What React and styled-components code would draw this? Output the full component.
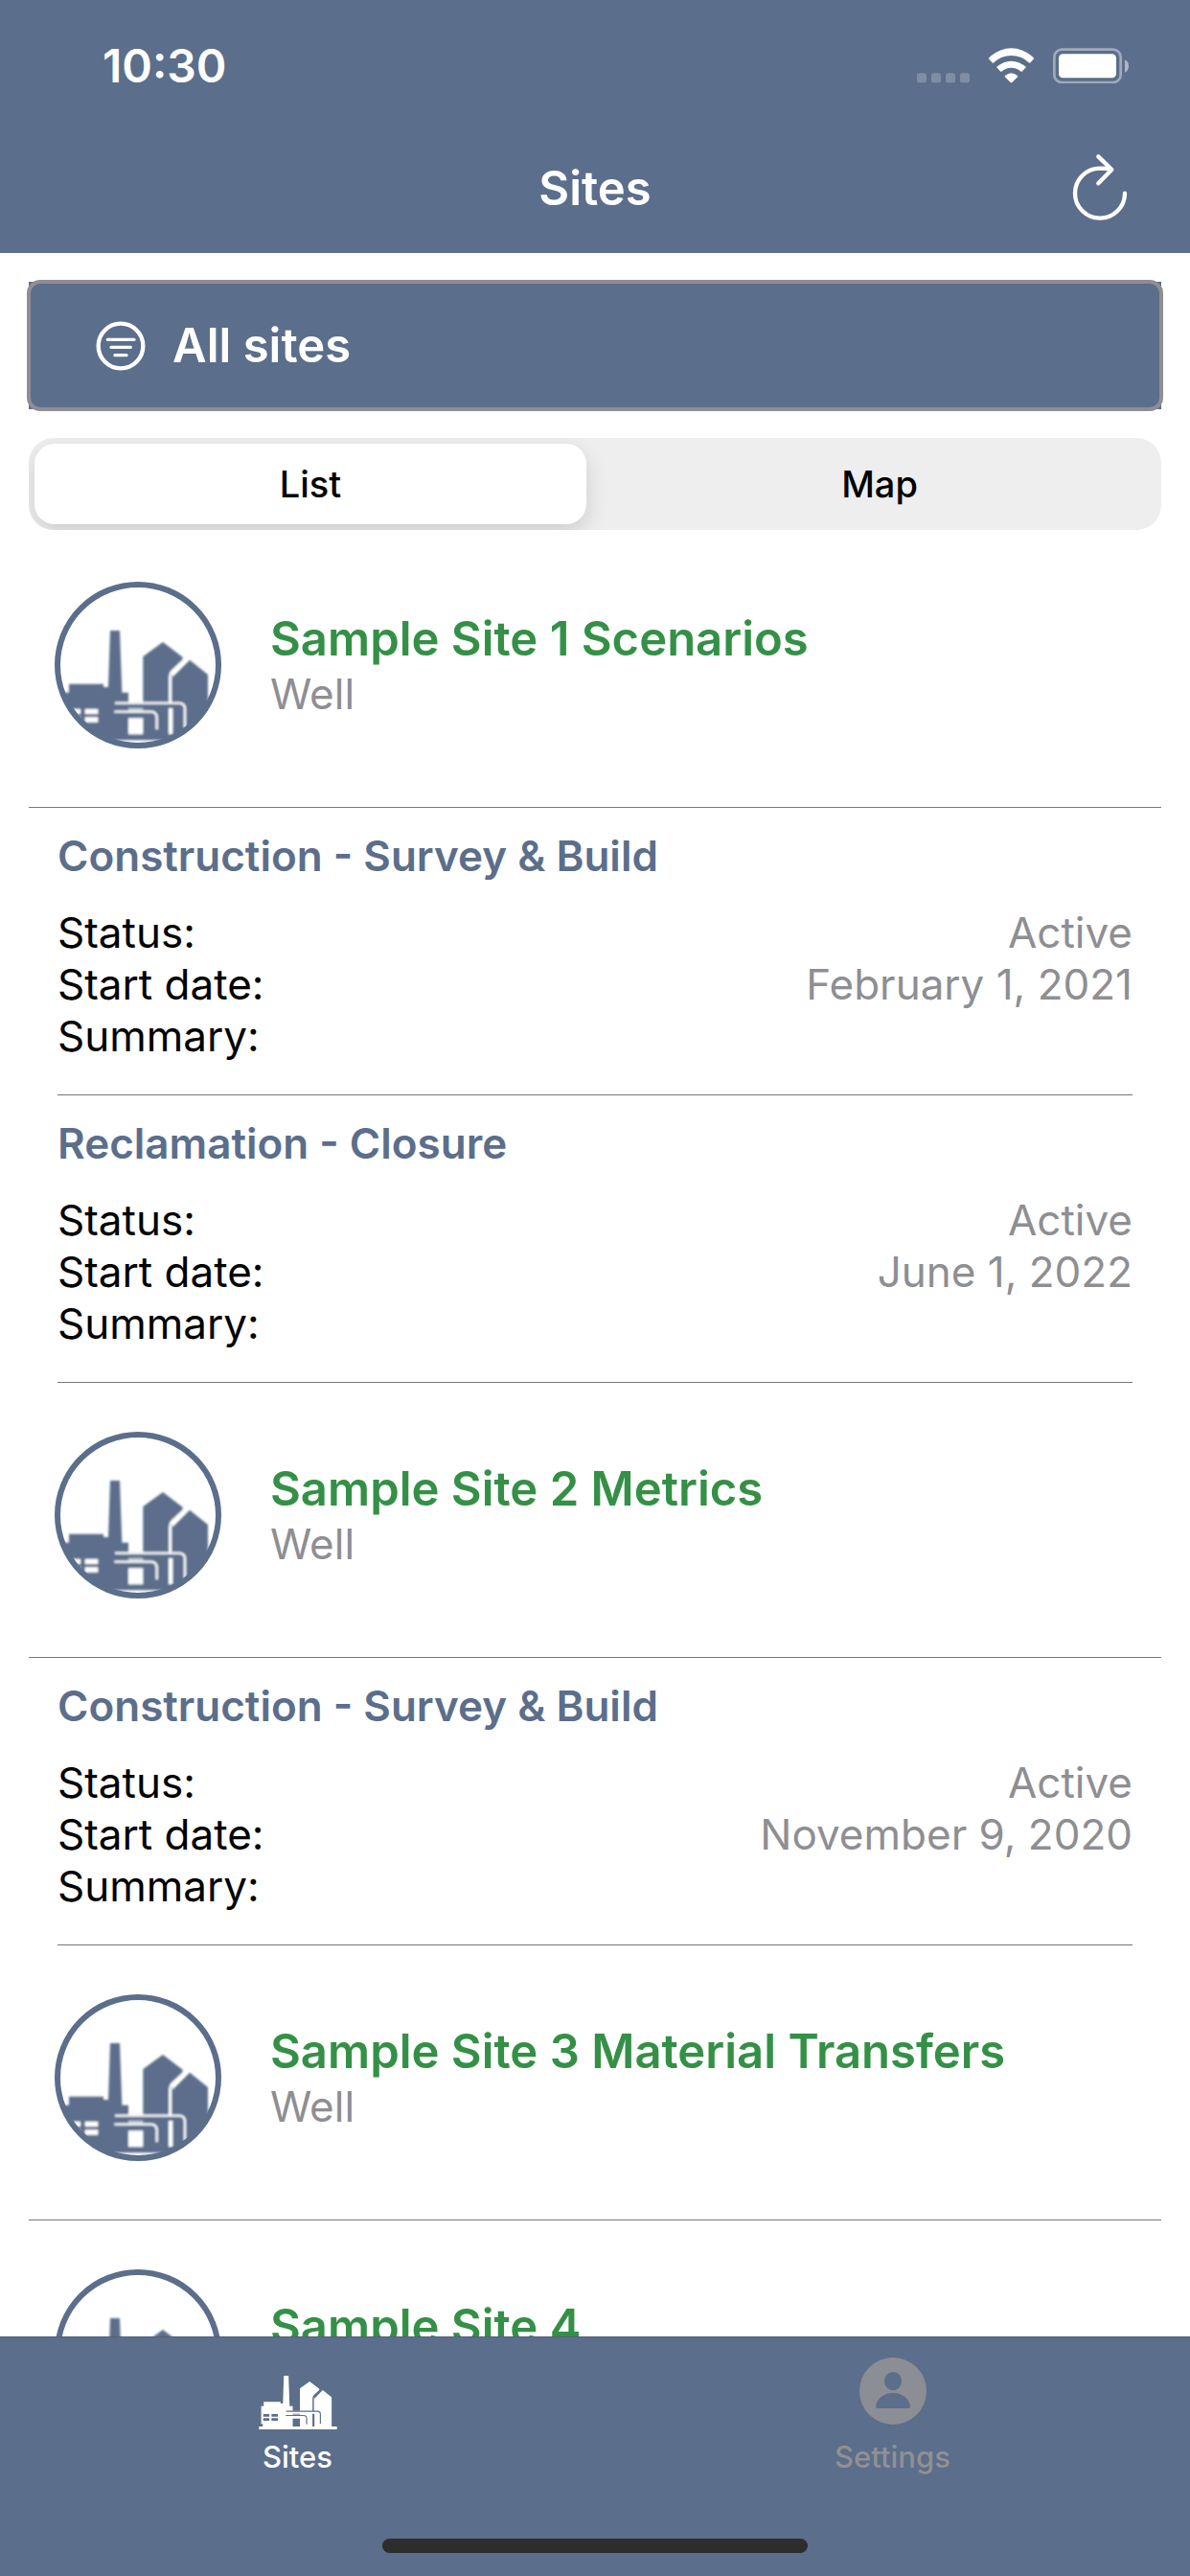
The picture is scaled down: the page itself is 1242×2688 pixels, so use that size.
import React, { useState } from 'react';
import styled, { createGlobalStyle, ThemeProvider } from 'styled-components';

const theme = {
  colors: {
    primary: '#5b6e8b',
    green: '#349046',
    gray: '#8e8e93',
    line: '#77777a',
  },
};

const sites = [
  {
    name: 'Sample Site 1 Scenarios',
    type: 'Well',
    phases: [
      { title: 'Construction - Survey & Build', status: 'Active', start: 'February 1, 2021' },
      { title: 'Reclamation - Closure', status: 'Active', start: 'June 1, 2022' },
    ],
  },
  {
    name: 'Sample Site 2 Metrics',
    type: 'Well',
    phases: [
      { title: 'Construction - Survey & Build', status: 'Active', start: 'November 9, 2020' },
    ],
  },
  { name: 'Sample Site 3 Material Transfers', type: 'Well', phases: [] },
  { name: 'Sample Site 4', type: 'Well', phases: [] },
];

const FactoryShape = ({ color, cut }) => (
  <g>
    <path
      fill={color}
      d="M66 529H90V511H80V398H96V371H204V381H219L225 204H255L262 398H282V428H328V285L390 240L452 287V300L420 332V350L474 296L531 342V529H565V547H66Z"
    />
    <path fill="none" stroke={cut} strokeWidth="9" d="M458 296L420 331Q413 338 413 348V430" />
    <path fill="none" stroke={cut} strokeWidth="7" d="M240 431H440Q459 431 459 450V510" />
    <path fill="none" stroke={cut} strokeWidth="7" d="M238 458H352Q371 458 371 477V514" />
    <path
      fill={cut}
      d="M93 449H132V465H93ZM146 449H187V465H146ZM93 475H132V491H93ZM146 475H187V491H146ZM282 478H328V529H282ZM408 447H421V529H408Z"
    />
    <path fill={cut} opacity="0.6" d="M282 446H328V456H282Z" />
  </g>
);

const SiteLogo = () => (
  <svg width="174" height="174" viewBox="51 51 522 522" aria-hidden="true">
    <defs>
      <clipPath id="logoClip">
        <circle cx="312" cy="312" r="252" />
      </clipPath>
      <filter id="logoSoft">
        <feGaussianBlur stdDeviation="3" />
      </filter>
    </defs>
    <g clipPath="url(#logoClip)">
      <g filter="url(#logoSoft)">
        <FactoryShape color={theme.colors.primary} cut="#fff" />
      </g>
    </g>
    <circle cx="312" cy="312" r="252" fill="none" stroke={theme.colors.primary} strokeWidth="18" />
  </svg>
);

const SitesIcon = () => (
  <svg width="82" height="58" viewBox="64 200 503 350" aria-hidden="true">
    <FactoryShape color="#fff" cut={theme.colors.primary} />
  </svg>
);

const SettingsIcon = () => (
  <svg width="70" height="70" viewBox="0 0 210 210" aria-hidden="true">
    <circle cx="105" cy="105" r="105" fill="#8b8e94" />
    <ellipse cx="105" cy="74" rx="27" ry="29" fill={theme.colors.primary} />
    <path
      fill={theme.colors.primary}
      d="M57 159Q51 159 51 152C54 130 76 111 105 111S156 130 159 152Q159 159 153 159Z"
    />
  </svg>
);

const StatusIcons = () => (
  <svg width="222" height="38" viewBox="0 0 666 114" aria-hidden="true">
    <g fill="#fff" opacity="0.22">
      <rect x="3" y="82" width="30" height="30" rx="8" />
      <rect x="48" y="82" width="30" height="30" rx="8" />
      <rect x="93" y="82" width="30" height="30" rx="8" />
      <rect x="138" y="82" width="30" height="30" rx="8" />
    </g>
    <g fill="#fff">
      <path d="M227 36Q231 32 235 28A96 96 0 0 1 362 28L370 36L357 50Q355 51 353 49A78 78 0 0 0 244 49Q242 51 240 50Z" />
      <path d="M252 63A68 68 0 0 1 345 63L332 77Q331 78 329 77A46 46 0 0 0 268 77Q266 78 265 77Z" />
      <path d="M279 90Q298 73 318 90L319 93L301 111Q298 113 296 111L278 93Z" />
    </g>
    <rect x="433" y="8" width="208" height="103" rx="24" fill="none" stroke="#fff" strokeWidth="8" opacity="0.42" />
    <rect x="447" y="22" width="180" height="75" rx="13" fill="#fff" />
    <path fill="#fff" opacity="0.5" d="M654 40Q666 46 666 60T654 80Z" />
  </svg>
);

const RefreshIcon = () => (
  <svg width="60" height="72" viewBox="0 0 180 216" aria-hidden="true">
    <path
      fill="none"
      stroke="#fff"
      strokeWidth="13"
      strokeLinecap="round"
      strokeLinejoin="round"
      d="M168 125A78 78 0 1 1 90 47Q110 47 126 51M85 10L127 51L85 94"
    />
  </svg>
);

const FilterIcon = () => (
  <svg width="52" height="52" viewBox="0 0 156 156" aria-hidden="true">
    <g fill="none" stroke="#fff" strokeLinecap="round">
      <circle cx="78" cy="78" r="70" strokeWidth="13" />
      <path strokeWidth="10" d="M37 58H120M48 82H109M60 107H96" />
    </g>
  </svg>
);

const Phase = ({ title, status, start }) => (
  <PhaseBox>
    <h3>{title}</h3>
    <dl>
      <Field>
        <dt>Status:</dt>
        <dd>{status}</dd>
      </Field>
      <Field>
        <dt>Start date:</dt>
        <dd>{start}</dd>
      </Field>
      <Field>
        <dt>Summary:</dt>
        <dd />
      </Field>
    </dl>
  </PhaseBox>
);

const App = () => {
  const [view, setView] = useState('list');

  return (
    <ThemeProvider theme={theme}>
      <GlobalStyle />
      <Screen>
        <Header>
          <StatusBar>
            <Clock>10:30</Clock>
            <StatusIcons />
          </StatusBar>
          <NavBar>
            <h1>Sites</h1>
            <RefreshButton type="button" aria-label="Refresh">
              <RefreshIcon />
            </RefreshButton>
          </NavBar>
        </Header>
        <Content>
          <FilterButton type="button">
            <FilterIcon />
            All sites
          </FilterButton>
          <Segments>
            <Segment type="button" $active={view === 'list'} onClick={() => setView('list')}>
              List
            </Segment>
            <Segment type="button" $active={view === 'map'} onClick={() => setView('map')}>
              Map
            </Segment>
          </Segments>
          <SiteList>
            {sites.map((site) => (
              <li key={site.name}>
                <SiteRow>
                  <SiteLogo />
                  <SiteText>
                    <h2>{site.name}</h2>
                    <p>{site.type}</p>
                  </SiteText>
                </SiteRow>
                {site.phases.map((phase) => (
                  <Phase key={phase.title} {...phase} />
                ))}
              </li>
            ))}
          </SiteList>
        </Content>
        <Footer>
          <TabBar>
            <Tab href="#sites" $active>
              <TabIcon>
                <SitesIcon />
              </TabIcon>
              Sites
            </Tab>
            <Tab href="#settings">
              <TabIcon>
                <SettingsIcon />
              </TabIcon>
              Settings
            </Tab>
          </TabBar>
          <HomeIndicator />
        </Footer>
      </Screen>
    </ThemeProvider>
  );
};

export default App;

const GlobalStyle = createGlobalStyle`
  * {
    box-sizing: border-box;
    margin: 0;
    padding: 0;
  }

  body {
    background: #fff;
    font-family: Inter, "Liberation Sans", sans-serif;
  }

  button {
    border: none;
    background: none;
    font-family: inherit;
    cursor: pointer;
  }

  svg {
    display: block;
    flex-shrink: 0;
  }
`;

const Screen = styled.div`
  height: 100vh;
  display: flex;
  flex-direction: column;
`;

const Header = styled.header`
  flex-shrink: 0;
  background: ${({ theme }) => theme.colors.primary};
  color: #fff;
`;

const StatusBar = styled.div`
  height: 132px;
  padding: 4px 64px 0 107px;
  display: flex;
  align-items: center;
  justify-content: space-between;
`;

const Clock = styled.span`
  font-size: 48px;
  font-weight: 600;
`;

const NavBar = styled.div`
  height: 132px;
  padding: 0 64px 4px;
  display: grid;
  grid-template-columns: 1fr auto 1fr;
  align-items: center;

  h1 {
    grid-column: 2;
    font-size: 49px;
    font-weight: 600;
  }
`;

const RefreshButton = styled.button`
  justify-self: end;
`;

const Content = styled.main`
  flex: 1;
  min-height: 0;
  padding: 30px 30px 0;
  display: flex;
  flex-direction: column;
`;

const FilterButton = styled.button`
  position: relative;
  flex-shrink: 0;
  height: 133px;
  padding: 0 70px;
  display: flex;
  align-items: center;
  gap: 28px;
  background: ${({ theme }) => theme.colors.primary};
  color: #fff;
  font-size: 49px;
  font-weight: 600;

  &::after {
    content: '';
    position: absolute;
    inset: -2px;
    border: 4px solid #8f8e92;
    border-radius: 14px;
  }
`;

const Segments = styled.div`
  flex-shrink: 0;
  height: 96px;
  margin-top: 30px;
  padding: 6px;
  display: flex;
  gap: 18px;
  border-radius: 26px;
  overflow: hidden;
  background: #eee;
`;

const Segment = styled.button`
  flex: 1;
  border-radius: 21px;
  background: ${({ $active }) => ($active ? '#fff' : 'transparent')};
  box-shadow: ${({ $active }) => ($active ? '0 9px 24px rgba(0, 0, 0, 0.14)' : 'none')};
  color: #000;
  font-size: 38px;
  font-weight: 500;
`;

const SiteList = styled.ul`
  flex: 1;
  min-height: 0;
  margin-top: 3px;
  overflow-y: auto;
  scrollbar-width: none;
  list-style: none;
`;

const SiteRow = styled.div`
  padding: 51px 27px 61px;
  display: flex;
  gap: 51px;
  border-bottom: 1px solid ${({ theme }) => theme.colors.line};
`;

const SiteText = styled.div`
  padding-top: 30px;

  h2 {
    color: ${({ theme }) => theme.colors.green};
    font-size: 49px;
    font-weight: 600;
    line-height: 60px;
  }

  p {
    color: ${({ theme }) => theme.colors.gray};
    font-size: 44px;
    line-height: 54px;
  }
`;

const PhaseBox = styled.section`
  margin: 0 30px;
  padding: 23px 0 34px;
  border-bottom: 1px solid ${({ theme }) => theme.colors.line};

  h3 {
    margin-bottom: 26px;
    color: ${({ theme }) => theme.colors.primary};
    font-size: 44px;
    font-weight: 600;
    line-height: 54px;
  }
`;

const Field = styled.div`
  min-height: 54px;
  display: flex;
  justify-content: space-between;
  font-size: 44px;
  line-height: 54px;

  dd {
    color: ${({ theme }) => theme.colors.gray};
  }
`;

const Footer = styled.footer`
  flex-shrink: 0;
  height: 250px;
  padding-bottom: 24px;
  display: flex;
  flex-direction: column;
  justify-content: space-between;
  align-items: center;
  border-top: 1px solid #50607a;
  background: ${({ theme }) => theme.colors.primary};
`;

const TabBar = styled.nav`
  width: 100%;
  display: flex;
`;

const Tab = styled.a`
  flex: 1;
  padding-top: 21px;
  display: flex;
  flex-direction: column;
  align-items: center;
  gap: 10px;
  color: ${({ $active }) => ($active ? '#fff' : '#919191')};
  font-size: 31px;
  font-weight: 500;
  line-height: 36px;
  text-decoration: none;
`;

const TabIcon = styled.span`
  height: 76px;
  display: flex;
  align-items: flex-end;

  ${Tab}:last-child & {
    align-items: flex-start;
  }
`;

const HomeIndicator = styled.div`
  width: 444px;
  height: 15px;
  border-radius: 8px;
  background: #2d2d2d;
`;
